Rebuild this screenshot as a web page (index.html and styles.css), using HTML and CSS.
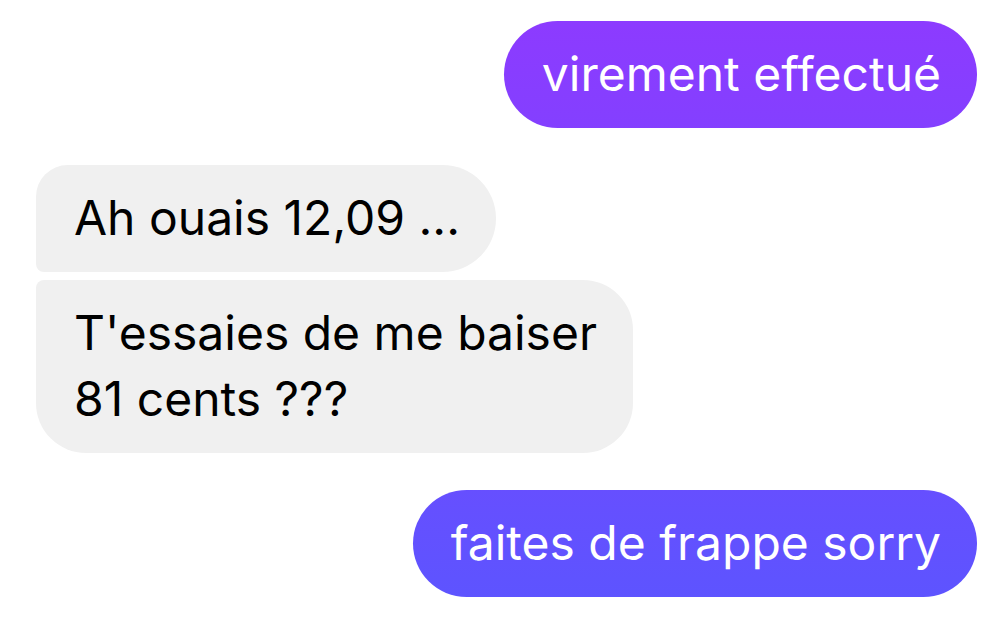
FILE: index.html
```html
<!DOCTYPE html>
<html lang="fr">

<head>
    <meta charset="UTF-8">
    <meta name="viewport" content="width=device-width, initial-scale=1.0">
    <title>Messages</title>
    <link rel="stylesheet" href="styles.css">
</head>

<body>
    <div class="thread">
        <div class="msg sent">virement effectué</div>

        <div class="group">
            <div class="msg received first">Ah ouais 12,09 ...</div>
            <div class="msg received last">T'essaies de me baiser<br>81 cents ???</div>
        </div>

        <div class="msg sent">faites de frappe sorry</div>
    </div>
</body>

</html>
```

FILE: styles.css
```css
body {
    margin: 0;
    background-color: #ffffff;
    font-family: 'Inter', 'Noto Sans', sans-serif;
}

.thread {
    display: flex;
    flex-direction: column;
    align-items: flex-start;
    gap: 37px;
    padding: 21px 28px 0 36px;
}

.group {
    display: flex;
    flex-direction: column;
    align-items: flex-start;
    gap: 8px;
}

.msg {
    box-sizing: border-box;
    padding: 20px 36px 21px 38px;
    font-size: 48px;
    line-height: 66px;
    border-radius: 54px;
    white-space: nowrap;
}

.sent {
    align-self: flex-end;
    color: #ffffff;
    background: linear-gradient(180deg, #8e3aff 0%, #5b55ff 100%);
    background-attachment: fixed;
}

.received {
    color: #000000;
    background-color: #f0f0f0;
}

.received.first {
    border-radius: 32px 54px 54px 8px;
}

.received.last {
    border-radius: 8px 50px 50px 50px;
}
```
